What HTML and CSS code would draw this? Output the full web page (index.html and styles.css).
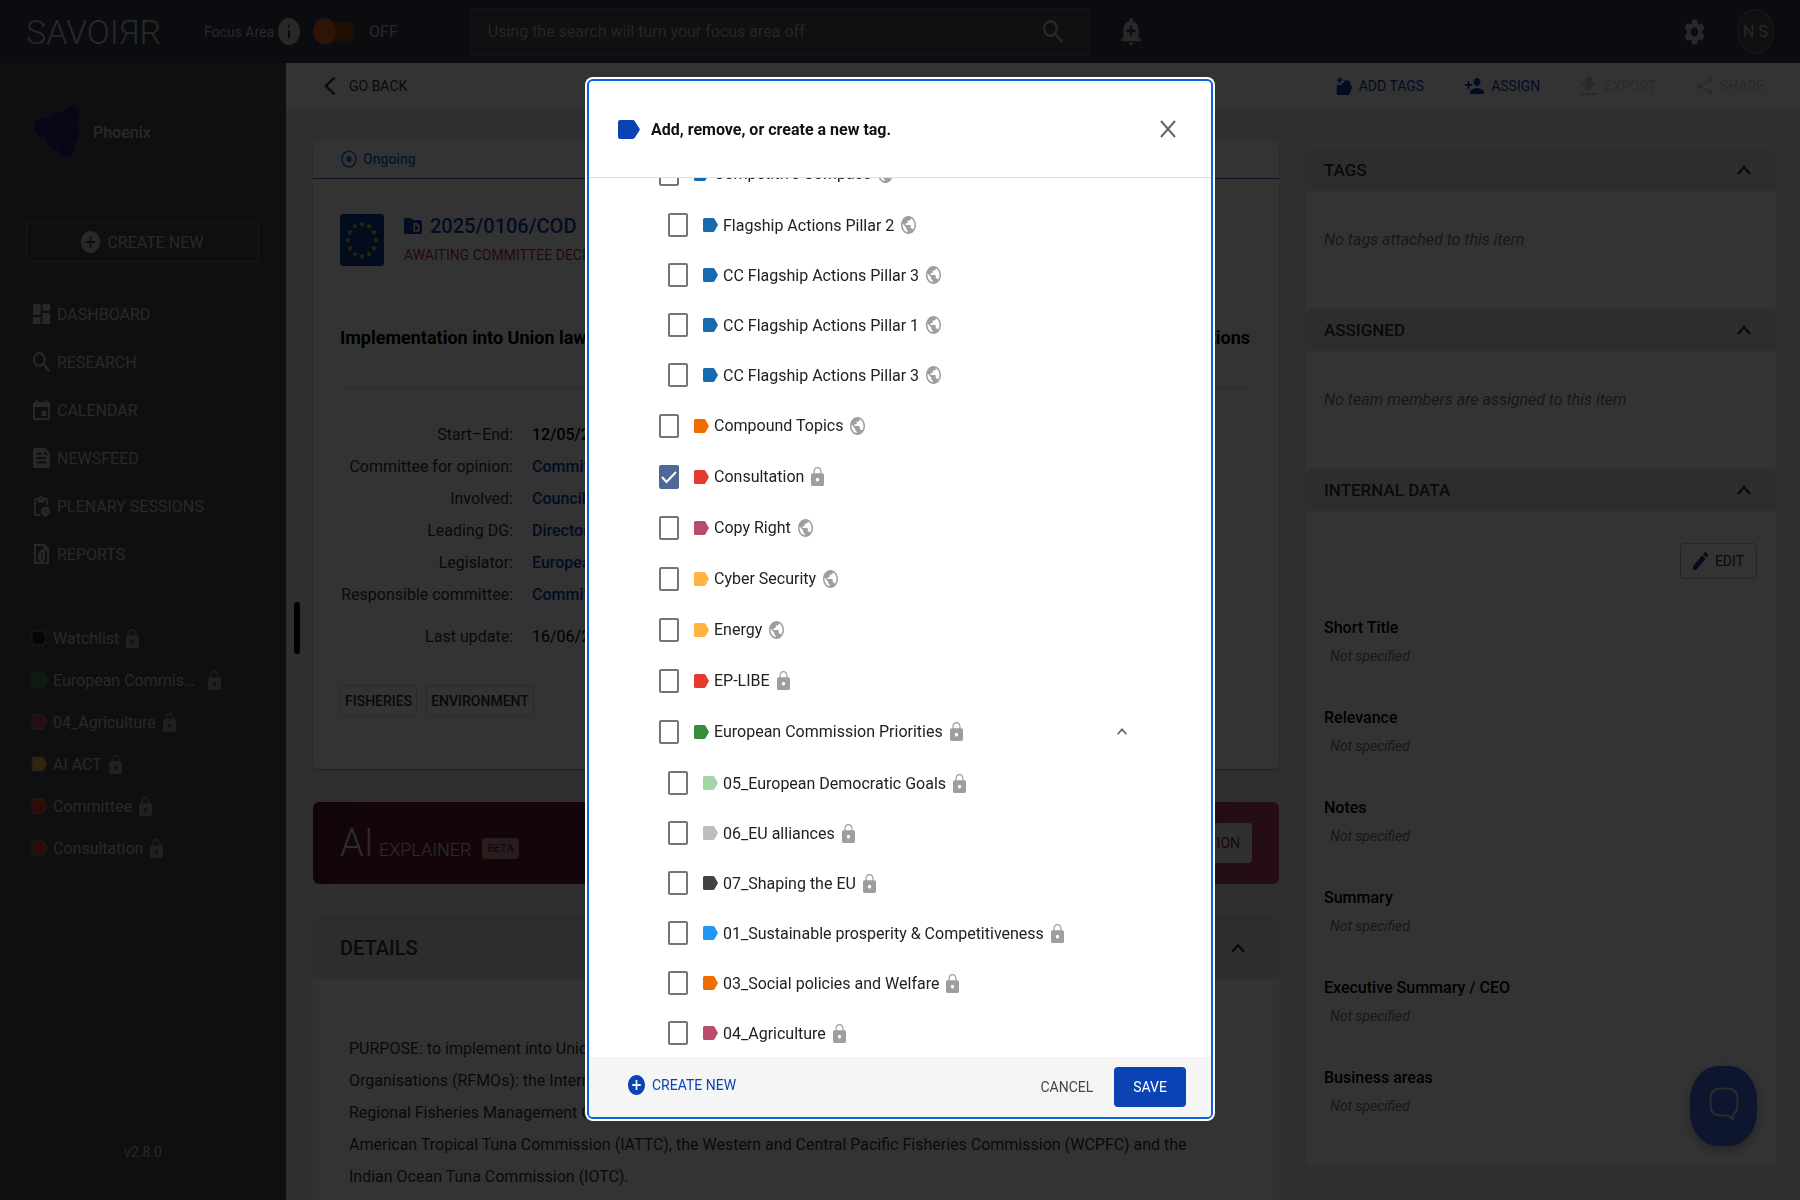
FILE: index.html
```html
<!DOCTYPE html>
<html lang="en">
<head>
  <meta charset="UTF-8" />
  <meta name="viewport" content="width=device-width, initial-scale=1" />
  <title>SAVOIRR - 2025/0106/COD</title>
  <link rel="stylesheet" href="styles.css">
</head>
<body>

<!-- icon sprite -->
<svg class="sprite" aria-hidden="true">
  <symbol id="i-add" viewBox="2 2 20 20" preserveAspectRatio="none"><path d="M12 2C6.48 2 2 6.48 2 12s4.48 10 10 10 10-4.48 10-10S17.52 2 12 2zm5 11h-4v4h-2v-4H7v-2h4V7h2v4h4v2z"/></symbol>
  <symbol id="i-info" viewBox="2 2 20 20" preserveAspectRatio="none"><path d="M12 2C6.48 2 2 6.48 2 12s4.48 10 10 10 10-4.48 10-10S17.52 2 12 2zm1 15h-2v-6h2v6zm0-8h-2V7h2v2z"/></symbol>
  <symbol id="i-dashboard" viewBox="3 3 18 18" preserveAspectRatio="none"><path d="M3 13h8V3H3v10zm0 8h8v-6H3v6zm10 0h8V11h-8v10zm0-18v6h8V3h-8z"/></symbol>
  <symbol id="i-search" viewBox="3 3 17.5 17.5" preserveAspectRatio="none"><path d="M15.5 14h-.79l-.28-.27C15.41 12.59 16 11.11 16 9.5 16 5.91 13.09 3 9.5 3S3 5.91 3 9.5 5.91 16 9.5 16c1.61 0 3.09-.59 4.23-1.57l.27.28v.79l5 4.99L20.49 19l-4.99-5zm-6 0C7.01 14 5 11.99 5 9.5S7.01 5 9.5 5 14 7.01 14 9.5 11.99 14 9.5 14z"/></symbol>
  <symbol id="i-event" viewBox="3 1 18 20" preserveAspectRatio="none"><path d="M17 12h-5v5h5v-5zM16 1v2H8V1H6v2H5c-1.11 0-1.99.9-1.99 2L3 19c0 1.1.89 2 2 2h14c1.1 0 2-.9 2-2V5c0-1.1-.9-2-2-2h-1V1h-2zm3 18H5V8h14v11z"/></symbol>
  <symbol id="i-feed" viewBox="3 3 18 18" preserveAspectRatio="none"><path d="M16 3H5c-1.1 0-2 .9-2 2v14c0 1.1.9 2 2 2h14c1.1 0 2-.9 2-2V8l-5-5zM7 7h5v2H7V7zm10 10H7v-2h10v2zm0-4H7v-2h10v2zm-2-4V5l4 4h-4z"/></symbol>
  <symbol id="i-pending" viewBox="3 1 19 21" preserveAspectRatio="none"><path d="M17 12c-2.76 0-5 2.24-5 5s2.24 5 5 5 5-2.24 5-5-2.24-5-5-5zm1.65 7.35L16.5 17.2V14h1v2.79l1.85 1.85-.7.71zM18 3h-3.18C14.4 1.84 13.3 1 12 1s-2.4.84-2.82 2H6c-1.1 0-2 .9-2 2v15c0 1.1.9 2 2 2h6.11c-.59-.57-1.07-1.25-1.42-2H6V5h2v3h8V5h2v5.08c.71.1 1.38.31 2 .6V5c0-1.1-.9-2-2-2zm-6 2c-.55 0-1-.45-1-1s.45-1 1-1 1 .45 1 1-.45 1-1 1z"/></symbol>
  <symbol id="i-report" viewBox="3 2 18 20" preserveAspectRatio="none"><path fill="none" stroke="currentColor" stroke-width="2" d="M5 3h10l4 4v14H5zM9.500 11v5a2.500 2.500 0 0 0 5 0v-5.500a1.700 1.700 0 0 0-3.400 0V16"/><path d="M14 3h2l4 4v2h-6z"/></symbol>
  <symbol id="i-lock" viewBox="4 1 16 21" preserveAspectRatio="none"><path d="M18 8h-1V6c0-2.760-2.240-5-5-5S7 3.240 7 6v2H6c-1.100 0-2 .9-2 2v10c0 1.100.9 2 2 2h12c1.100 0 2-.9 2-2V10c0-1.100-.9-2-2-2zm-6 9c-1.100 0-2-.9-2-2s.9-2 2-2 2 .9 2 2-.9 2-2 2zM8.500 8V6c0-1.900 1.500-3.500 3.500-3.500s3.500 1.600 3.500 3.500v2z"/></symbol>
  <symbol id="i-globe" viewBox="2 2 20 20" preserveAspectRatio="none"><path d="M12 2C6.480 2 2 6.480 2 12s4.480 10 10 10 10-4.480 10-10S17.520 2 12 2zm-1 17.930c-3.950-.49-7-3.850-7-7.930 0-.62.08-1.210.21-1.790L9 15v1c0 1.100.9 2 2 2v1.930zm6.900-2.540c-.26-.81-1-1.390-1.900-1.390h-1v-3c0-.55-.45-1-1-1H8v-2h2c.55 0 1-.45 1-1V7h2c1.100 0 2-.9 2-2v-.41c2.930 1.190 5 4.060 5 7.410 0 2.080-.8 3.970-2.100 5.390z"/></symbol>
  <symbol id="i-tag" viewBox="0 0 15 13" preserveAspectRatio="none"><path d="M1.500 0H10Q11 0 11.600 1L15 6.500 11.600 12Q11 13 10 13H1.500Q0 13 0 11.500V1.500Q0 0 1.500 0z"/></symbol>
  <symbol id="i-gear" viewBox="2 2 20 20" preserveAspectRatio="none"><path d="M19.14 12.94c.04-.3.06-.61.06-.94 0-.32-.02-.64-.07-.94l2.03-1.58c.18-.14.23-.41.12-.61l-1.92-3.32c-.12-.22-.37-.29-.59-.22l-2.39.96c-.5-.38-1.03-.7-1.62-.94l-.36-2.54c-.04-.24-.24-.41-.48-.41h-3.84c-.24 0-.43.17-.47.41l-.36 2.54c-.59.24-1.13.57-1.62.94l-2.39-.96c-.22-.08-.47 0-.59.22L2.74 8.87c-.12.21-.08.47.12.61l2.03 1.58c-.05.3-.09.63-.09.94s.02.64.07.94l-2.03 1.58c-.18.14-.23.41-.12.61l1.92 3.32c.12.22.37.29.59.22l2.39-.96c.5.38 1.03.7 1.62.94l.36 2.54c.05.24.24.41.48.41h3.84c.24 0 .44-.17.47-.41l.36-2.54c.59-.24 1.13-.56 1.62-.94l2.39.96c.22.08.47 0 .59-.22l1.92-3.32c.12-.22.07-.47-.12-.61l-2.01-1.58zM12 15.6c-1.98 0-3.6-1.62-3.6-3.6s1.62-3.6 3.6-3.6 3.6 1.62 3.6 3.6-1.62 3.6-3.6 3.6z"/></symbol>
  <symbol id="i-bell" viewBox="3 2 18 21" preserveAspectRatio="none"><path d="M10.010 21.010c0 1.100.89 1.990 1.990 1.990s1.990-.89 1.990-1.990h-3.980zm8.870-4.190V11c0-3.250-2.250-5.970-5.290-6.690v-.72C13.590 2.710 12.880 2 12 2s-1.590.71-1.590 1.590v.72C7.370 5.030 5.120 7.750 5.120 11v5.820L3 18.940V20h18v-1.060l-2.120-2.120zM16 13.010h-3v3h-2v-3H8V11h3V8h2v3h3v2.010z"/></symbol>
  <symbol id="i-person" viewBox="1 4 22 16" preserveAspectRatio="none"><path d="M15 12c2.210 0 4-1.790 4-4s-1.790-4-4-4-4 1.790-4 4 1.790 4 4 4zm-9-2V7H4v3H1v2h3v3h2v-3h3v-2H6zm9 4c-2.670 0-8 1.340-8 4v2h16v-2c0-2.660-5.330-4-8-4z"/></symbol>
  <symbol id="i-addtag" viewBox="0 0 16 16" preserveAspectRatio="none"><path d="M3 0v2H1v1.600h2v2h1.600v-2h2V2h-2V0zM8 3h4q1 0 1.500.8L16 9.500l-2.500 5.700q-.5.800-1.500.800H2q-1.200 0-1.200-1.200V7H6V5h2z"/></symbol>
  <symbol id="i-download" viewBox="5 3 14 17" preserveAspectRatio="none"><path d="M19 9h-4V3H9v6H5l7 7 7-7zM5 18v2h14v-2H5z"/></symbol>
  <symbol id="i-share" viewBox="3 2 18 20" preserveAspectRatio="none"><path fill="none" stroke="currentColor" stroke-width="2" d="M18 5 6 12l12 7"/><circle cx="18" cy="5" r="3"/><circle cx="6" cy="12" r="3"/><circle cx="18" cy="19" r="3"/></symbol>
  <symbol id="i-edit" viewBox="3 3 18 18" preserveAspectRatio="none"><path d="M3 17.250V21h3.750L17.810 9.940l-3.750-3.750L3 17.250zM20.710 7.040c.39-.39.39-1.020 0-1.410l-2.340-2.340c-.39-.39-1.020-.39-1.410 0l-1.830 1.830 3.750 3.750 1.830-1.830z"/></symbol>
  <symbol id="i-up" viewBox="0 0 14 10" preserveAspectRatio="none"><path fill="none" stroke="currentColor" stroke-width="2.400" d="M1 9l6-7 6 7"/></symbol>
  <symbol id="i-star" viewBox="0 0 10 10"><path d="M5 0l1.200 3.600H10L7 5.900 8.100 9.500 5 7.300 1.900 9.500 3 5.900 0 3.600h3.800z"/></symbol>
</svg>

<header class="topbar">
  <a class="brand" href="#" aria-label="SAVOIRR">SAVOIЯR</a>
  <label class="focus" for="focus">Focus Area <svg class="info"><use href="#i-info"/></svg></label>
  <input class="switch" type="checkbox" id="focus">
  <span class="switch-state">OFF</span>
  <div class="search">
    <input type="text" aria-label="Search" placeholder="Using the search will turn your focus area off">
    <svg><use href="#i-search"/></svg>
  </div>
  <button class="icon-btn" aria-label="Alerts"><svg class="bell"><use href="#i-bell"/></svg></button>
  <button class="icon-btn settings" aria-label="Settings"><svg class="gear"><use href="#i-gear"/></svg></button>
  <button class="avatar">N S</button>
</header>

<div class="shell">
  <aside class="sidebar">
    <div class="team">
      <svg class="team-logo" viewBox="0 0 46 54">
        <ellipse cx="28" cy="27" rx="17" ry="21"/>
        <ellipse cx="9" cy="22" rx="9" ry="10"/>
        <ellipse cx="37" cy="11" rx="9" ry="10"/>
        <ellipse cx="32" cy="43" rx="9" ry="10"/>
      </svg>
      Phoenix
    </div>
    <button class="create"><svg><use href="#i-add"/></svg>CREATE NEW</button>
    <nav class="nav">
      <a href="#"><svg><use href="#i-dashboard"/></svg>DASHBOARD</a>
      <a href="#"><svg><use href="#i-search"/></svg>RESEARCH</a>
      <a href="#"><svg><use href="#i-event"/></svg>CALENDAR</a>
      <a href="#"><svg><use href="#i-feed"/></svg>NEWSFEED</a>
      <a href="#"><svg><use href="#i-pending"/></svg>PLENARY SESSIONS</a>
      <a href="#"><svg><use href="#i-report"/></svg>REPORTS</a>
    </nav>
    <nav class="side-tags">
      <a href="#"><svg class="tag black"><use href="#i-tag"/></svg><span>Watchlist</span><svg class="lock"><use href="#i-lock"/></svg></a>
      <a href="#"><svg class="tag green"><use href="#i-tag"/></svg><span>European Commission Priorities</span><svg class="lock"><use href="#i-lock"/></svg></a>
      <a href="#"><svg class="tag rose"><use href="#i-tag"/></svg><span>04_Agriculture</span><svg class="lock"><use href="#i-lock"/></svg></a>
      <a href="#"><svg class="tag amber"><use href="#i-tag"/></svg><span>AI ACT</span><svg class="lock"><use href="#i-lock"/></svg></a>
      <a href="#"><svg class="tag red"><use href="#i-tag"/></svg><span>Committee</span><svg class="lock"><use href="#i-lock"/></svg></a>
      <a href="#"><svg class="tag red"><use href="#i-tag"/></svg><span>Consultation</span><svg class="lock"><use href="#i-lock"/></svg></a>
    </nav>
    <div class="version">v2.8.0</div>
    <div class="handle"></div>
  </aside>

  <main class="main">
    <div class="actions">
      <a class="back" href="#"><svg viewBox="0 0 12 20"><path fill="none" stroke="currentColor" stroke-width="2.400" d="M10.500 1.500 2 10l8.500 8.500"/></svg>GO BACK</a>
      <button class="action"><svg><use href="#i-addtag"/></svg>ADD TAGS</button>
      <button class="action"><svg class="wide"><use href="#i-person"/></svg>ASSIGN</button>
      <button class="action" disabled><svg><use href="#i-download"/></svg>EXPORT</button>
      <button class="action" disabled><svg><use href="#i-share"/></svg>SHARE</button>
    </div>

    <div class="columns">
      <div class="left">
        <section class="card file">
          <div class="status">
            <svg viewBox="0 0 16 18" preserveAspectRatio="none"><ellipse cx="8" cy="9" rx="7" ry="8" fill="none" stroke="currentColor" stroke-width="1.500"/><ellipse cx="8" cy="9" rx="2.500" ry="3"/></svg>
            Ongoing
          </div>
          <div class="file-body">
            <div class="file-head">
              <svg class="flag" viewBox="0 0 44 52">
                <g fill="#ffd617">
                  <use href="#i-star" x="19" y="7" width="6" height="6"/><use href="#i-star" x="26" y="9" width="6" height="6"/>
                  <use href="#i-star" x="31" y="15" width="6" height="6"/><use href="#i-star" x="33" y="23" width="6" height="6"/>
                  <use href="#i-star" x="31" y="31" width="6" height="6"/><use href="#i-star" x="26" y="37" width="6" height="6"/>
                  <use href="#i-star" x="19" y="39" width="6" height="6"/><use href="#i-star" x="12" y="37" width="6" height="6"/>
                  <use href="#i-star" x="7" y="31" width="6" height="6"/><use href="#i-star" x="5" y="23" width="6" height="6"/>
                  <use href="#i-star" x="7" y="15" width="6" height="6"/><use href="#i-star" x="12" y="9" width="6" height="6"/>
                </g>
              </svg>
              <div>
                <a class="ref" href="#"><svg viewBox="0 0 18 16"><path fill-rule="evenodd" d="M1.500 0H7l2 2h7.500Q18 2 18 3.500v11q0 1.500-1.500 1.500h-15Q0 16 0 14.500v-13Q0 0 1.500 0zM9.500 5v8.500h6V7.500L13 5zm1.500 1.500h1.500V8.500H14V12h-3z"/></svg>2025/0106/COD</a>
                <p class="stage">AWAITING COMMITTEE DECISION</p>
              </div>
            </div>
            <h1><span>Implementation into Union law of measures</span> <span>adopted by fisheries organisations</span></h1>
            <dl class="facts">
              <dt>Start–End:</dt><dd>12/05/2025 –</dd>
              <dt>Committee for opinion:</dt><dd><a href="#">Committee</a></dd>
              <dt>Involved:</dt><dd><a href="#">Council</a></dd>
              <dt>Leading DG:</dt><dd><a href="#">Directorate-General</a></dd>
              <dt>Legislator:</dt><dd><a href="#">European Parliament</a></dd>
              <dt>Responsible committee:</dt><dd><a href="#">Committee</a></dd>
              <dt class="updated">Last update:</dt><dd class="updated light">16/06/2025</dd>
            </dl>
            <div class="chips"><span>FISHERIES</span><span>ENVIRONMENT</span></div>
          </div>
        </section>

        <section class="explainer">
          <span class="ai">AI</span>
          <span class="ai-name">EXPLAINER</span>
          <span class="beta">BETA</span>
          <button>START EXPLANATION</button>
        </section>

        <section class="card details">
          <h2>DETAILS <svg class="up"><use href="#i-up"/></svg></h2>
          <p>PURPOSE: to implement into Union law the measures of Regional Fisheries Management<br>
          Organisations (RFMOs): the International Commission for Conservation and the<br>
          Regional Fisheries Management Organisation (SPRFMO), the Convention (IOTC), the<br>
          American Tropical Tuna Commission (IATTC), the Western and Central Pacific Fisheries Commission (WCPFC) and the<br>
          Indian Ocean Tuna Commission (IOTC).</p>
        </section>
      </div>

      <aside class="card right">
        <h3>TAGS <svg class="up"><use href="#i-up"/></svg></h3>
        <p class="empty">No tags attached to this item</p>
        <h3>ASSIGNED <svg class="up"><use href="#i-up"/></svg></h3>
        <p class="empty">No team members are assigned to this item</p>
        <h3>INTERNAL DATA <svg class="up"><use href="#i-up"/></svg></h3>
        <div class="internal">
          <button class="edit"><svg><use href="#i-edit"/></svg>EDIT</button>
          <dl>
            <dt>Short Title</dt><dd>Not specified</dd>
            <dt>Relevance</dt><dd>Not specified</dd>
            <dt>Notes</dt><dd>Not specified</dd>
            <dt>Summary</dt><dd>Not specified</dd>
            <dt>Executive Summary / CEO</dt><dd>Not specified</dd>
            <dt>Business areas</dt><dd>Not specified</dd>
          </dl>
        </div>
      </aside>
    </div>
  </main>
</div>

<button class="chat" aria-label="Open chat">
  <svg viewBox="0 0 30 34" preserveAspectRatio="none"><path fill="none" stroke="currentColor" stroke-width="2" stroke-linejoin="round" d="M24 32.500 19 28.500H12Q1.500 28.500 1.500 18v-6Q1.500 1.500 12 1.500h6Q28.500 1.500 28.500 12v6q0 6-4 9z"/></svg>
</button>

<div class="backdrop">
  <form class="modal" role="dialog" aria-modal="true" aria-labelledby="modal-title">
    <div class="modal-head">
      <svg class="title-tag"><use href="#i-tag"/></svg>
      <h2 id="modal-title">Add, remove, or create a new tag.</h2>
      <button type="button" class="close" aria-label="Close"><svg viewBox="0 0 16 18" preserveAspectRatio="none"><path fill="none" stroke="currentColor" stroke-width="2" d="M1 1l14 16M15 1 1 17"/></svg></button>
    </div>

    <div class="modal-body">
      <ul class="tags">
        <li>
          <label><input type="checkbox"><svg class="tag blue"><use href="#i-tag"/></svg>Competitive Compass<svg class="globe"><use href="#i-globe"/></svg></label>
          <ul>
            <li><label><input type="checkbox"><svg class="tag blue"><use href="#i-tag"/></svg>Flagship Actions Pillar 2<svg class="globe"><use href="#i-globe"/></svg></label></li>
            <li><label><input type="checkbox"><svg class="tag blue"><use href="#i-tag"/></svg>CC Flagship Actions Pillar 3<svg class="globe"><use href="#i-globe"/></svg></label></li>
            <li><label><input type="checkbox"><svg class="tag blue"><use href="#i-tag"/></svg>CC Flagship Actions Pillar 1<svg class="globe"><use href="#i-globe"/></svg></label></li>
            <li><label><input type="checkbox"><svg class="tag blue"><use href="#i-tag"/></svg>CC Flagship Actions Pillar 3<svg class="globe"><use href="#i-globe"/></svg></label></li>
          </ul>
        </li>
        <li><label><input type="checkbox"><svg class="tag orange"><use href="#i-tag"/></svg>Compound Topics<svg class="globe"><use href="#i-globe"/></svg></label></li>
        <li><label><input type="checkbox" checked><svg class="tag red"><use href="#i-tag"/></svg>Consultation<svg class="lock"><use href="#i-lock"/></svg></label></li>
        <li><label><input type="checkbox"><svg class="tag rose"><use href="#i-tag"/></svg>Copy Right<svg class="globe"><use href="#i-globe"/></svg></label></li>
        <li><label><input type="checkbox"><svg class="tag amber"><use href="#i-tag"/></svg>Cyber Security<svg class="globe"><use href="#i-globe"/></svg></label></li>
        <li><label><input type="checkbox"><svg class="tag amber"><use href="#i-tag"/></svg>Energy<svg class="globe"><use href="#i-globe"/></svg></label></li>
        <li><label><input type="checkbox"><svg class="tag red"><use href="#i-tag"/></svg>EP-LIBE<svg class="lock"><use href="#i-lock"/></svg></label></li>
        <li>
          <div class="parent">
            <label><input type="checkbox"><svg class="tag green"><use href="#i-tag"/></svg>European Commission Priorities<svg class="lock"><use href="#i-lock"/></svg></label>
            <button type="button" class="fold" aria-label="Collapse"><svg><use href="#i-up"/></svg></button>
          </div>
          <ul>
            <li><label><input type="checkbox"><svg class="tag mint"><use href="#i-tag"/></svg>05_European Democratic Goals<svg class="lock"><use href="#i-lock"/></svg></label></li>
            <li><label><input type="checkbox"><svg class="tag grey"><use href="#i-tag"/></svg>06_EU alliances<svg class="lock"><use href="#i-lock"/></svg></label></li>
            <li><label><input type="checkbox"><svg class="tag dark"><use href="#i-tag"/></svg>07_Shaping the EU<svg class="lock"><use href="#i-lock"/></svg></label></li>
            <li><label><input type="checkbox"><svg class="tag sky"><use href="#i-tag"/></svg>01_Sustainable prosperity &amp; Competitiveness<svg class="lock"><use href="#i-lock"/></svg></label></li>
            <li><label><input type="checkbox"><svg class="tag orange"><use href="#i-tag"/></svg>03_Social policies and Welfare<svg class="lock"><use href="#i-lock"/></svg></label></li>
            <li><label><input type="checkbox"><svg class="tag rose"><use href="#i-tag"/></svg>04_Agriculture<svg class="lock"><use href="#i-lock"/></svg></label></li>
          </ul>
        </li>
      </ul>
    </div>

    <div class="modal-foot">
      <button type="button" class="new-tag"><svg><use href="#i-add"/></svg>CREATE NEW</button>
      <button type="button" class="cancel">CANCEL</button>
      <button type="submit" class="save">SAVE</button>
    </div>
  </form>
</div>

</body>
</html>
```
FILE: styles.css
```css
* {
  box-sizing: border-box;
}
body {
  margin: 0;
  height: 100vh;
  overflow: hidden;
  display: flex;
  flex-direction: column;
  background: #ebebeb;
  color: #212121;
  font-family: Roboto, "Liberation Sans", sans-serif;
  font-size: 16px;
}
button, input {
  font-family: inherit;
  font-size: inherit;
  color: inherit;
}
button {
  background: none;
  border: none;
  padding: 0;
  cursor: pointer;
}
a {
  color: inherit;
  text-decoration: none;
}
svg {
  fill: currentColor;
  flex: none;
}
symbol {
  overflow: visible;
}
ul, dl, dd, p, h1, h2, h3 {
  margin: 0;
  padding: 0;
  list-style: none;
}
.sprite {
  position: absolute;
  width: 0;
  height: 0;
}

/* tag colours */
.tag {
  width: 15px;
  height: 14px;
}
.blue { color: #1769b0; }
.orange { color: #ef6c00; }
.red { color: #e53a30; }
.rose { color: #b84d69; }
.amber { color: #ffb340; }
.green { color: #3a8a3e; }
.mint { color: #a5d6a7; }
.grey { color: #bdbdbd; }
.dark { color: #424242; }
.sky { color: #2196f3; }
.black { color: #222; }
.lock {
  width: 13px;
  height: 19px;
  color: #9e9e9e;
}
.globe {
  width: 15px;
  height: 18px;
  color: #9e9e9e;
}
.up {
  width: 14px;
  height: 10px;
}

/* top bar */
.topbar {
  flex: none;
  height: 63px;
  display: flex;
  align-items: center;
  padding: 0 26px;
  background: #373f50;
  color: #c8c8c8;
}
.brand {
  width: 178px;
  font-size: 34px;
  font-weight: 300;
}
.focus {
  display: flex;
  align-items: center;
  gap: 4px;
  font-size: 14px;
}
.info {
  width: 22px;
  height: 27px;
}
.switch {
  appearance: none;
  width: 42px;
  height: 27px;
  margin: 0 14px 0 13px;
  background:
    radial-gradient(closest-side, #e06418 96%, transparent) left / 23px 27px no-repeat,
    linear-gradient(#8f4a20, #8f4a20) right / 30px 19px no-repeat;
  border-radius: 12px;
}
.search {
  flex: 0 1 620px;
  height: 48px;
  margin-left: 72px;
  padding: 0 26px 0 17px;
  display: flex;
  align-items: center;
  border: 1px solid #6c7076;
  border-radius: 4px;
  background: #4b5058;
}
.search input {
  flex: 1;
  min-width: 0;
  padding: 0;
  border: none;
  outline: none;
  background: none;
}
.search input::placeholder {
  color: #b8b8b8;
}
.search svg {
  width: 20px;
  height: 23px;
}
.icon-btn {
  display: flex;
  margin-left: 31px;
}
.bell {
  width: 20px;
  height: 27px;
}
.gear {
  width: 21px;
  height: 26px;
}
.settings {
  margin-left: auto;
}
.avatar {
  width: 37px;
  height: 45px;
  margin-left: 32px;
  border: 1px solid #787c84;
  border-radius: 50%;
  background: #4b5058;
}

/* sidebar */
.shell {
  flex: 1;
  min-height: 0;
  display: flex;
}
.sidebar {
  position: relative;
  flex: none;
  width: 286px;
  padding: 42px 27px 0 26px;
  background: #4b4d55;
  color: #c8c8c8;
}
.team {
  display: flex;
  align-items: center;
  gap: 13px;
  padding-left: 8px;
  font-weight: 500;
}
.team-logo {
  width: 46px;
  height: 54px;
  fill: #2a2070;
  stroke: #443c80;
}
.create {
  width: 100%;
  height: 40px;
  margin-top: 63px;
  display: flex;
  align-items: center;
  justify-content: center;
  gap: 7px;
  border: 1px solid #787a80;
  border-radius: 4px;
}
.create svg {
  width: 19px;
  height: 22px;
}
.nav {
  padding: 28px 0 18px;
  border-bottom: 1px solid #60626a;
}
.nav a {
  display: flex;
  align-items: center;
  gap: 7px;
  height: 48px;
  padding-left: 7px;
}
.nav svg {
  width: 17px;
  height: 20px;
}
.side-tags {
  padding-top: 20px;
}
.side-tags a {
  display: flex;
  align-items: center;
  gap: 6px;
  height: 42px;
  padding-left: 6px;
}
.side-tags span {
  max-width: 148px;
  margin-right: 1px;
  overflow: hidden;
  text-overflow: ellipsis;
  white-space: nowrap;
}
.side-tags .tag {
  stroke: #909090;
  overflow: visible;
}
.version {
  position: absolute;
  bottom: 40px;
  left: 0;
  width: 100%;
  text-align: center;
  font-size: 14px;
}
.handle {
  position: absolute;
  top: 50%;
  right: -14px;
  width: 6px;
  height: 52px;
  margin-top: -30px;
  border-radius: 3px;
  background: #000;
}

/* main */
.main {
  flex: 1;
  min-width: 0;
  color: #333;
}
.actions {
  height: 46px;
  padding: 0 36px 0 38px;
  display: flex;
  align-items: center;
  gap: 41px;
  background: #fff;
  font-size: 14px;
}
.back {
  display: flex;
  align-items: center;
  gap: 13px;
  margin-right: auto;
}
.back svg {
  width: 12px;
  height: 20px;
}
.action {
  display: flex;
  align-items: center;
  gap: 7px;
  color: #0b3fae;
}
.action svg {
  width: 16px;
  height: 18px;
}
.action .wide {
  width: 19px;
  height: 16px;
}
.action:disabled {
  color: #d0d0d0;
}
.columns {
  display: grid;
  grid-template-columns: minmax(0, 966fr) minmax(0, 470fr);
  align-items: start;
  gap: 27px;
  padding: 32px 24px 0 27px;
}
.card {
  background: #fff;
  border-radius: 6px;
}
.file {
  box-shadow: 0 1px 2px rgba(0, 0, 0, .3);
}
.status {
  display: flex;
  align-items: center;
  gap: 6px;
  height: 38px;
  padding: 0 28px 1px;
  border-bottom: 1px solid #2a5fa8;
  color: #1976d2;
  font-size: 14px;
  font-weight: 500;
}
.status svg {
  width: 16px;
  height: 18px;
}
.file-body {
  padding: 35px 27px 52px;
}
.file-head {
  display: flex;
  gap: 20px;
}
.flag {
  width: 44px;
  height: 52px;
  border-radius: 3px;
  background: #0a3c8c;
}
.ref {
  display: flex;
  align-items: center;
  gap: 8px;
  height: 24px;
  color: #0b3fae;
  font-size: 20px;
  font-weight: 500;
}
.ref svg {
  width: 18px;
  height: 16px;
}
.stage {
  margin-top: 9px;
  color: #b0304a;
  font-size: 14px;
  line-height: 16px;
}
h1 {
  display: flex;
  justify-content: space-between;
  padding: 60px 2px 37px 0;
  border-bottom: 1px solid #ddd;
  color: #000;
  font-size: 18px;
  line-height: 24px;
  font-weight: 700;
}
.facts {
  display: grid;
  grid-template-columns: 173px 1fr;
  column-gap: 19px;
  padding-top: 31px;
  line-height: 32px;
}
.facts dt {
  text-align: right;
  white-space: nowrap;
}
.facts dd {
  color: #000;
  font-weight: 500;
}
.facts a {
  color: #0b3fae;
}
.facts .updated {
  margin-top: 10px;
}
.facts .light {
  font-weight: 400;
}
.chips {
  display: flex;
  gap: 9px;
  padding-top: 32px;
}
.chips span {
  padding: 0 4px;
  border: 1px solid #d0d0d0;
  border-radius: 4px;
  font-size: 14px;
  line-height: 30px;
  font-weight: 500;
}
.explainer {
  display: flex;
  align-items: center;
  height: 82px;
  margin-top: 33px;
  padding: 0 27px;
  border-radius: 6px;
  background: linear-gradient(100deg, #5c1a2a, #701c3e 50%, #b84a68);
  color: #ddd;
}
.ai {
  margin-right: 5px;
  font-size: 38px;
  font-weight: 300;
}
.ai-name {
  padding-top: 12px;
  font-size: 18px;
  font-weight: 300;
}
.beta {
  margin: 10px auto 0 11px;
  padding: 0 5px;
  border-radius: 4px;
  background: #c08a96;
  color: #5c1a2a;
  font-size: 11px;
  line-height: 21px;
}
.explainer button {
  height: 40px;
  padding: 0 12px;
  border-radius: 4px;
  background: #eee;
  color: #8a2040;
  font-size: 14px;
}
.details {
  margin-top: 32px;
  padding-bottom: 54px;
}
.details h2 {
  display: flex;
  align-items: center;
  justify-content: space-between;
  height: 63px;
  padding: 0 34px 0 27px;
  border-radius: 6px 6px 0 0;
  background: #e2e2e2;
  font-size: 20px;
  font-weight: 500;
}
.details p {
  padding: 54px 36px 0;
  line-height: 32px;
  white-space: nowrap;
}

/* right column */
.right {
  margin-top: 8px;
  padding-bottom: 9px;
}
.right h3 {
  display: flex;
  align-items: center;
  justify-content: space-between;
  height: 42px;
  padding: 0 25px 0 18px;
  border-radius: 6px 6px 0 0;
  background: #e2e2e2;
  font-size: 17px;
  font-weight: 500;
}
.empty {
  height: 118px;
  padding: 37px 18px 0;
  color: #777;
  font-style: italic;
  line-height: 24px;
}
.internal {
  padding: 32px 19px 0 18px;
}
.edit {
  display: flex;
  align-items: center;
  gap: 7px;
  height: 36px;
  margin-left: auto;
  padding: 0 12px;
  border: 1px solid #b8b8c8;
  border-radius: 4px;
  font-size: 14px;
}
.edit svg {
  width: 15px;
  height: 18px;
  color: #0b3f80;
}
.internal dl {
  padding-top: 37px;
}
.internal dt {
  color: #000;
  font-weight: 500;
  line-height: 24px;
}
.internal dd {
  height: 66px;
  padding: 6px 0 0 6px;
  color: #777;
  font-size: 14px;
  font-style: italic;
  line-height: 20px;
}
.chat {
  position: fixed;
  right: 43px;
  bottom: 54px;
  width: 67px;
  height: 80px;
  border-radius: 28px / 34px;
  background: #4468e8;
  box-shadow: 0 4px 12px rgba(0, 0, 0, .3);
  color: #d8d8d8;
}
.chat svg {
  width: 30px;
  height: 34px;
}

/* modal */
.backdrop {
  position: fixed;
  inset: 0;
  display: flex;
  align-items: center;
  justify-content: center;
  padding-bottom: 2px;
  background: rgba(0, 0, 0, .8);
}
.modal {
  width: 626px;
  height: calc(100% - 158px);
  display: flex;
  flex-direction: column;
  overflow: hidden;
  border: 2px solid #0b62dc;
  border-radius: 6px;
  background: #fff;
  box-shadow: 0 0 0 2px #fff;
}
.modal-head {
  flex: none;
  height: 97px;
  display: flex;
  align-items: center;
  padding: 0 35px 0 29px;
  border-bottom: 1px solid #e0e0e0;
  color: #0b43b5;
}
.title-tag {
  width: 22px;
  height: 19px;
}
.modal-head h2 {
  margin: 0 auto 0 11px;
  color: #111;
  font-size: 16px;
  font-weight: 700;
}
.close {
  color: #666;
}
.close svg {
  display: block;
  width: 16px;
  height: 18px;
}
.modal-body {
  flex: 1;
  min-height: 0;
  overflow: hidden;
}
.tags {
  margin-top: -30px;
  padding-left: 70px;
}
.tags label {
  display: flex;
  align-items: center;
  height: 51px;
}
.tags ul {
  padding: 1px 0 0 9px;
}
.tags ul label {
  height: 50px;
}
.tags .tag {
  margin: 0 5px 0 15px;
}
.tags .lock, .tags .globe {
  margin-left: 7px;
}
.tags input {
  appearance: none;
  width: 20px;
  height: 24px;
  margin: 0;
  border: 2px solid #757575;
  border-radius: 2px;
  cursor: pointer;
}
.tags input:checked {
  border-color: #4f6896;
  background: #4f6896 url("data:image/svg+xml,%3Csvg xmlns='http://www.w3.org/2000/svg' viewBox='0 0 16 16' preserveAspectRatio='none'%3E%3Cpath fill='none' stroke='%23fff' stroke-width='2' d='M1 8l4.500 5L15 3'/%3E%3C/svg%3E") center / 16px 16px no-repeat;
}
.parent {
  display: flex;
  align-items: center;
  justify-content: space-between;
  padding-right: 84px;
}
.fold {
  color: #666;
}
.fold svg {
  display: block;
  width: 10px;
  height: 7px;
}
.modal-foot {
  flex: none;
  height: 60px;
  display: flex;
  align-items: center;
  padding: 0 25px 0 39px;
  background: #f5f5f5;
  font-size: 14px;
}
.new-tag {
  display: flex;
  align-items: center;
  gap: 7px;
  margin-right: auto;
  padding-bottom: 4px;
  color: #0b43b5;
}
.new-tag svg {
  width: 17px;
  height: 20px;
}
.cancel {
  color: #444;
}
.save {
  height: 40px;
  margin-left: 21px;
  padding: 0 19px;
  border-radius: 4px;
  background: #0b43b5;
  color: #fff;
}
```
